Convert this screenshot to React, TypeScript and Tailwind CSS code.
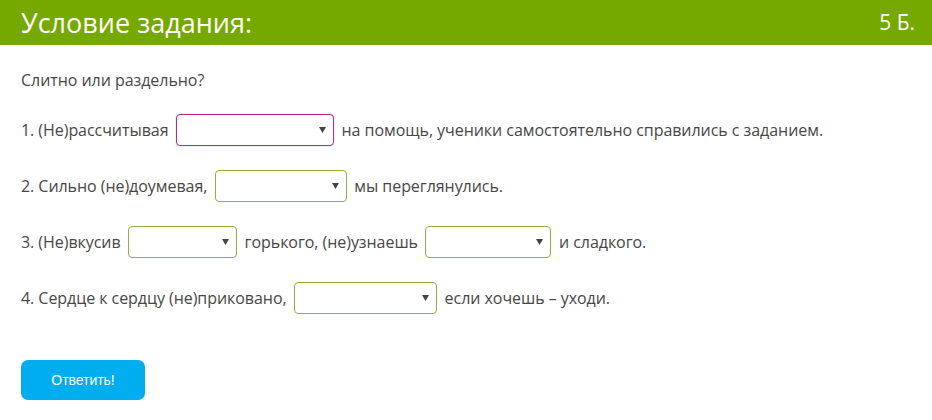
function Select({ w, pink }: { w: string; pink?: boolean }) {
  return (
    <span
      className={`inline-flex h-[32px] ${w} items-center justify-end rounded-[4px] border bg-white pr-[7px] align-middle ${
        pink ? 'border-[#b0307f] shadow-[0_0_2px_rgba(176,48,127,0.35)]' : 'border-[#8fae46]'
      }`}
    >
      <svg width="7" height="6" viewBox="0 0 7 6">
        <polygon points="0,0 7,0 3.5,6" fill="#444" />
      </svg>
    </span>
  );
}

export default function App() {
  return (
    <div className="w-[932px] h-[420px] bg-white text-[#474747]" style={{ fontFamily: "'Open Sans', sans-serif" }}>
      {/* Header */}
      <div className="flex h-[45px] items-center justify-between bg-[#76a900] pl-[21px] pr-[17px] text-white">
        <h1 className="text-[27px] leading-none">Условие задания:</h1>
        <span className="text-[21px] leading-none">5 Б.</span>
      </div>

      {/* Body */}
      <div className="px-[21px] text-[16px] tracking-[-0.05px]">
        <p className="mt-[24px] leading-[22px]">Слитно или раздельно?</p>

        <div className="mt-[22px] flex flex-col gap-[23px]">
          <div className="flex h-[33px] items-center gap-[7.5px]">
            <span>1. (Не)рассчитывая</span>
            <Select w="w-[158px]" pink />
            <span>на помощь, ученики самостоятельно справились с заданием.</span>
          </div>
          <div className="flex h-[33px] items-center gap-[7.5px]">
            <span>2. Сильно (не)доумевая,</span>
            <Select w="w-[132px]" />
            <span>мы переглянулись.</span>
          </div>
          <div className="flex h-[33px] items-center gap-[7.5px]">
            <span>3. (Не)вкусив</span>
            <Select w="w-[109px]" />
            <span>горького, (не)узнаешь</span>
            <Select w="w-[126px]" />
            <span>и сладкого.</span>
          </div>
          <div className="flex h-[33px] items-center gap-[7.5px]">
            <span>4. Сердце к сердцу (не)приковано,</span>
            <Select w="w-[143px]" />
            <span>если хочешь – уходи.</span>
          </div>
        </div>

        <button
          className="mt-[46px] h-[40px] w-[124px] rounded-[7px] bg-[#00adef] text-[14px] text-white"
          style={{ fontFamily: "'Liberation Sans', Arial, sans-serif" }}
        >
          Ответить!
        </button>
      </div>
    </div>
  );
}
